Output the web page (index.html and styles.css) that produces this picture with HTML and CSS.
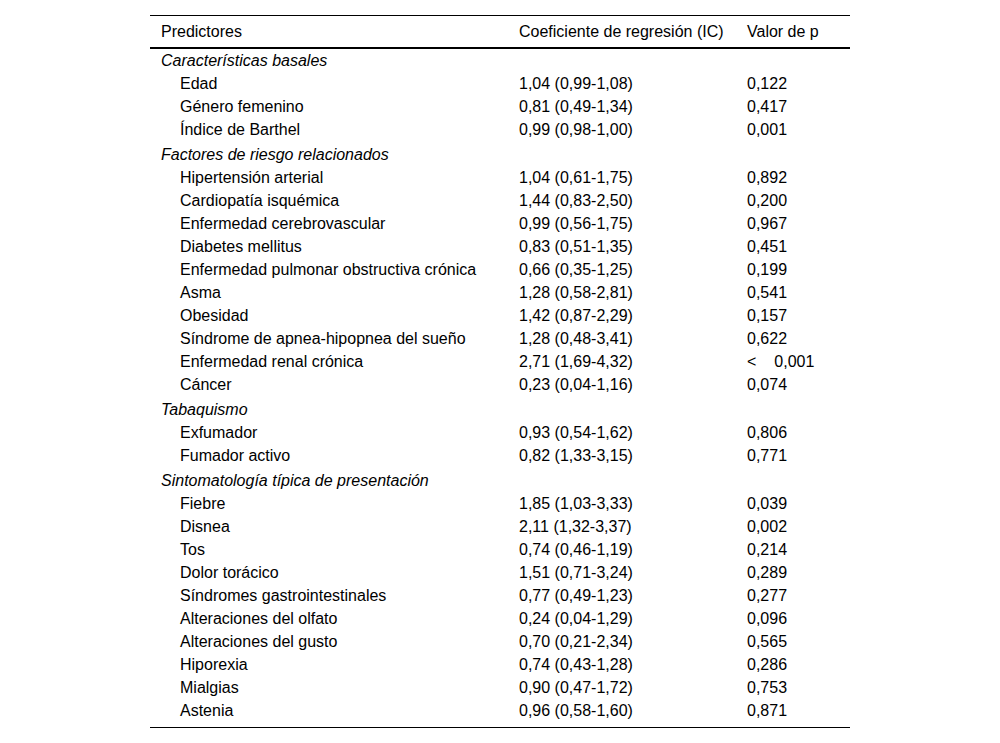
FILE: index.html
```html
<!DOCTYPE html>
<html lang="es">
<head>
<meta charset="utf-8">
<title>Predictores</title>
<link rel="stylesheet" href="styles.css">
</head>
<body>
<table class="tbl">
  <colgroup>
    <col class="c1"><col class="c2"><col class="c3">
  </colgroup>
  <thead>
    <tr><th>Predictores</th><th>Coeficiente de regresión (IC)</th><th>Valor de p</th></tr>
  </thead>
  <tbody>
    <tr class="grp first"><td class="g">Características basales</td><td></td><td></td></tr>
    <tr><td class="i">Edad</td><td>1,04 (0,99-1,08)</td><td>0,122</td></tr>
    <tr><td class="i">Género femenino</td><td>0,81 (0,49-1,34)</td><td>0,417</td></tr>
    <tr><td class="i">Índice de Barthel</td><td>0,99 (0,98-1,00)</td><td>0,001</td></tr>
    <tr class="grp"><td class="g">Factores de riesgo relacionados</td><td></td><td></td></tr>
    <tr><td class="i">Hipertensión arterial</td><td>1,04 (0,61-1,75)</td><td>0,892</td></tr>
    <tr><td class="i">Cardiopatía isquémica</td><td>1,44 (0,83-2,50)</td><td>0,200</td></tr>
    <tr><td class="i">Enfermedad cerebrovascular</td><td>0,99 (0,56-1,75)</td><td>0,967</td></tr>
    <tr><td class="i">Diabetes mellitus</td><td>0,83 (0,51-1,35)</td><td>0,451</td></tr>
    <tr><td class="i">Enfermedad pulmonar obstructiva crónica</td><td>0,66 (0,35-1,25)</td><td>0,199</td></tr>
    <tr><td class="i">Asma</td><td>1,28 (0,58-2,81)</td><td>0,541</td></tr>
    <tr><td class="i">Obesidad</td><td>1,42 (0,87-2,29)</td><td>0,157</td></tr>
    <tr><td class="i">Síndrome de apnea-hipopnea del sueño</td><td>1,28 (0,48-3,41)</td><td>0,622</td></tr>
    <tr><td class="i">Enfermedad renal crónica</td><td>2,71 (1,69-4,32)</td><td><span class="lt">&lt;</span>0,001</td></tr>
    <tr><td class="i">Cáncer</td><td>0,23 (0,04-1,16)</td><td>0,074</td></tr>
    <tr class="grp"><td class="g">Tabaquismo</td><td></td><td></td></tr>
    <tr><td class="i">Exfumador</td><td>0,93 (0,54-1,62)</td><td>0,806</td></tr>
    <tr><td class="i">Fumador activo</td><td>0,82 (1,33-3,15)</td><td>0,771</td></tr>
    <tr class="grp"><td class="g">Sintomatología típica de presentación</td><td></td><td></td></tr>
    <tr><td class="i">Fiebre</td><td>1,85 (1,03-3,33)</td><td>0,039</td></tr>
    <tr><td class="i">Disnea</td><td>2,11 (1,32-3,37)</td><td>0,002</td></tr>
    <tr><td class="i">Tos</td><td>0,74 (0,46-1,19)</td><td>0,214</td></tr>
    <tr><td class="i">Dolor torácico</td><td>1,51 (0,71-3,24)</td><td>0,289</td></tr>
    <tr><td class="i">Síndromes gastrointestinales</td><td>0,77 (0,49-1,23)</td><td>0,277</td></tr>
    <tr><td class="i">Alteraciones del olfato</td><td>0,24 (0,04-1,29)</td><td>0,096</td></tr>
    <tr><td class="i">Alteraciones del gusto</td><td>0,70 (0,21-2,34)</td><td>0,565</td></tr>
    <tr><td class="i">Hiporexia</td><td>0,74 (0,43-1,28)</td><td>0,286</td></tr>
    <tr><td class="i">Mialgias</td><td>0,90 (0,47-1,72)</td><td>0,753</td></tr>
    <tr class="last"><td class="i">Astenia</td><td>0,96 (0,58-1,60)</td><td>0,871</td></tr>
  </tbody>
</table>
</body>
</html>
```
FILE: styles.css
```css
html, body {
  margin: 0;
  padding: 0;
  background: #fff;
}
body {
  font-family: "Liberation Sans", Arial, sans-serif;
  font-size: 16px;
  color: #000;
}
.tbl {
  margin: 15px 0 0 150px;
  width: 700px;
  border-collapse: collapse;
  table-layout: fixed;
}
.c1 { width: 358px; }
.c2 { width: 228px; }
.c3 { width: 114px; }
.tbl th {
  font-weight: normal;
  text-align: left;
  line-height: 23px;
  padding: 4px 11px;
  border-top: 1px solid #000;
  border-bottom: 2px solid #000;
  white-space: nowrap;
}
.tbl td {
  line-height: 23px;
  padding: 0 11px;
  white-space: nowrap;
  vertical-align: top;
}
.tbl td.g { font-style: italic; }
.tbl td.i { padding-left: 30px; }
.tbl tr.grp td { padding-top: 2px; }
.tbl tr.grp.first td { padding-top: 0; }
.tbl tr.last td {
  padding-bottom: 5px;
  border-bottom: 1px solid #000;
}
.lt { display: inline-block; margin-right: 18px; }
```
